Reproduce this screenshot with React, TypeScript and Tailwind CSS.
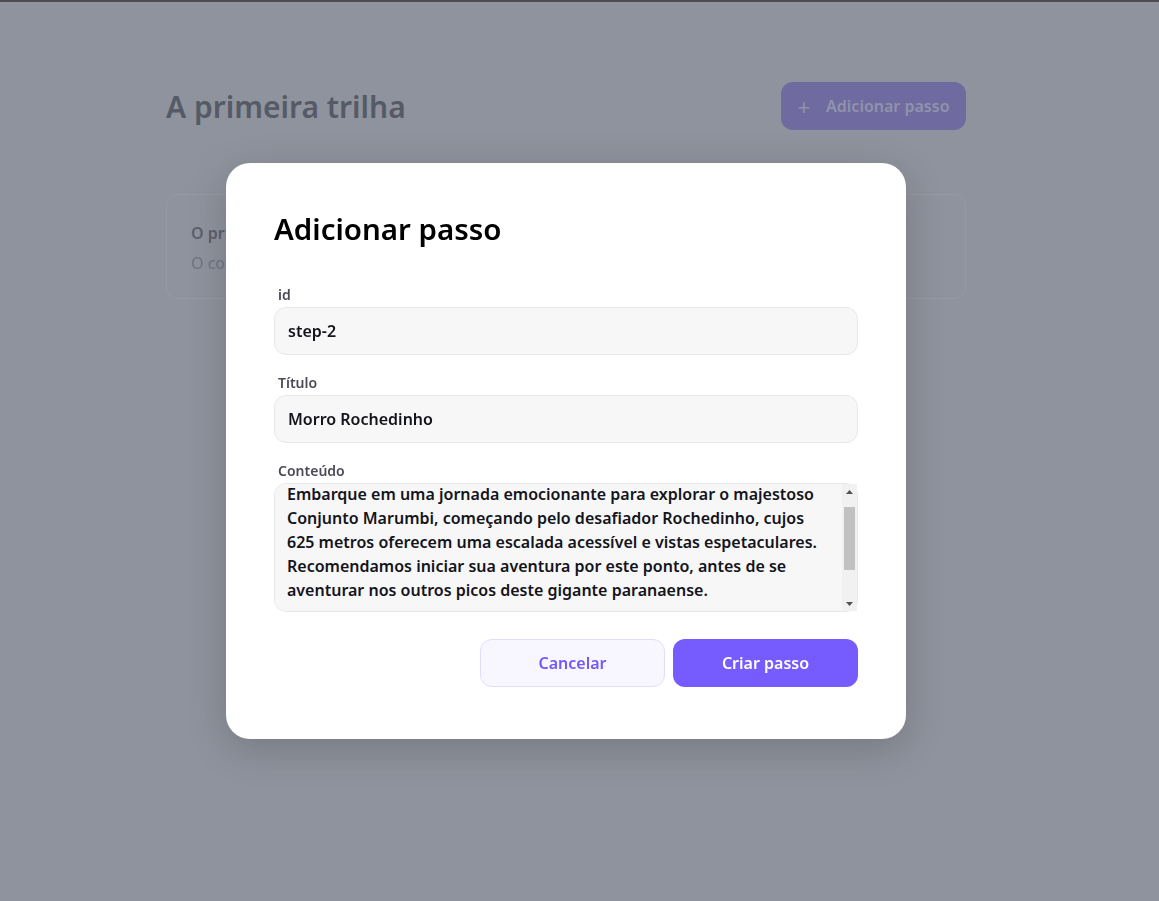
import React, { useEffect, useRef } from "react";

const CONTENT =
  "Embarque em uma jornada emocionante para explorar o majestoso Conjunto Marumbi, começando pelo desafiador Rochedinho, cujos 625 metros oferecem uma escalada acessível e vistas espetaculares. Recomendamos iniciar sua aventura por este ponto, antes de se aventurar nos outros picos deste gigante paranaense.\n\n\n";

export default function App() {
  const ta = useRef<HTMLTextAreaElement>(null);
  useEffect(() => {
    if (ta.current) ta.current.scrollTop = 14;
  }, []);
  return (
    <div
      className="min-h-[901px] w-full bg-[#8f939d] border-t-2 border-[#4b4d52]"
      style={{ fontFamily: '"Noto Sans", "Open Sans", sans-serif' }}
    >
      <div className="w-[1132px]">
        <div className="mx-auto w-[800px] pt-[80px]">
          <div className="flex items-center justify-between">
            <h1 className="text-[30px] font-semibold text-[#555a67]">A primeira trilha</h1>
            <button className="flex h-12 w-[185px] items-center justify-center gap-4 rounded-xl bg-[#6f6aa0] text-base font-semibold text-[#9093ab]">
              <span className="text-[22px] font-normal leading-none">+</span>
              Adicionar passo
            </button>
          </div>
          <div className="mt-16 h-[105px] rounded-xl border border-[#979aa4] px-6 pt-[26px]">
            <div className="text-base font-semibold text-[#5c606e]">O primeiro passo</div>
            <div className="mt-1.5 text-base text-[#6f7383]">O conteúdo do primeiro passo</div>
          </div>
        </div>
      </div>

      <div className="fixed top-0 bottom-0 left-0 right-[27px] flex items-start justify-center pt-[163px]">
        <div className="w-[680px] rounded-3xl bg-white px-12 pt-[48px] pb-[52px] shadow-[0_10px_40px_rgba(0,0,0,0.18)]">
          <h2 className="text-[29.5px] font-semibold leading-[36px] text-black">Adicionar passo</h2>
          <div className="mt-[36px] flex flex-col gap-4">
            <div>
              <label className="block pl-1 text-sm font-semibold leading-6 text-[#4b4b58]">id</label>
              <input
                defaultValue="step-2"
                className="h-12 w-full rounded-xl border border-[#e8e8ea] bg-[#f7f7f7] px-[13px] text-base font-semibold text-[#14141c] outline-none"
              />
            </div>
            <div>
              <label className="block pl-1 text-sm font-semibold leading-6 text-[#4b4b58]">Título</label>
              <input
                defaultValue="Morro Rochedinho"
                className="h-12 w-full rounded-xl border border-[#e8e8ea] bg-[#f7f7f7] px-[13px] text-base font-semibold text-[#14141c] outline-none"
              />
            </div>
            <div>
              <label className="block pl-1 text-sm font-semibold leading-6 text-[#4b4b58]">Conteúdo</label>
              <div className="relative">
                <textarea
                  ref={ta}
                  defaultValue={CONTENT}
                  className="block h-[129px] w-full resize-none overflow-y-scroll rounded-xl border border-[#e8e8ea] bg-[#f7f7f7] pl-[12px] pr-[27px] py-3 text-base font-semibold leading-6 text-[#14141c] outline-none [scrollbar-width:none]"
                />
                <div className="absolute top-px bottom-px right-px flex w-[15px] flex-col items-center bg-[#f1f1f1]">
                  <div className="flex h-[15px] w-full items-center justify-center">
                    <svg width="7" height="4" viewBox="0 0 7 4">
                      <path d="M0 4 L3.5 0 L7 4 Z" fill="#505050" />
                    </svg>
                  </div>
                  <div className="mt-[8px] h-[63px] w-[11px] bg-[#c1c1c1]" />
                  <div className="flex-1" />
                  <div className="flex h-[15px] w-full items-center justify-center">
                    <svg width="7" height="4" viewBox="0 0 7 4">
                      <path d="M0 0 L7 0 L3.5 4 Z" fill="#505050" />
                    </svg>
                  </div>
                </div>
              </div>
            </div>
          </div>
          <div className="mt-[27px] flex justify-end gap-2">
            <button className="h-12 w-[185px] rounded-xl border border-[#e2dcff] bg-[#f8f6ff] text-base font-semibold text-[#7357ff]">
              Cancelar
            </button>
            <button className="h-12 w-[185px] rounded-xl bg-[#765bff] text-base font-semibold text-white">
              Criar passo
            </button>
          </div>
        </div>
      </div>
    </div>
  );
}
